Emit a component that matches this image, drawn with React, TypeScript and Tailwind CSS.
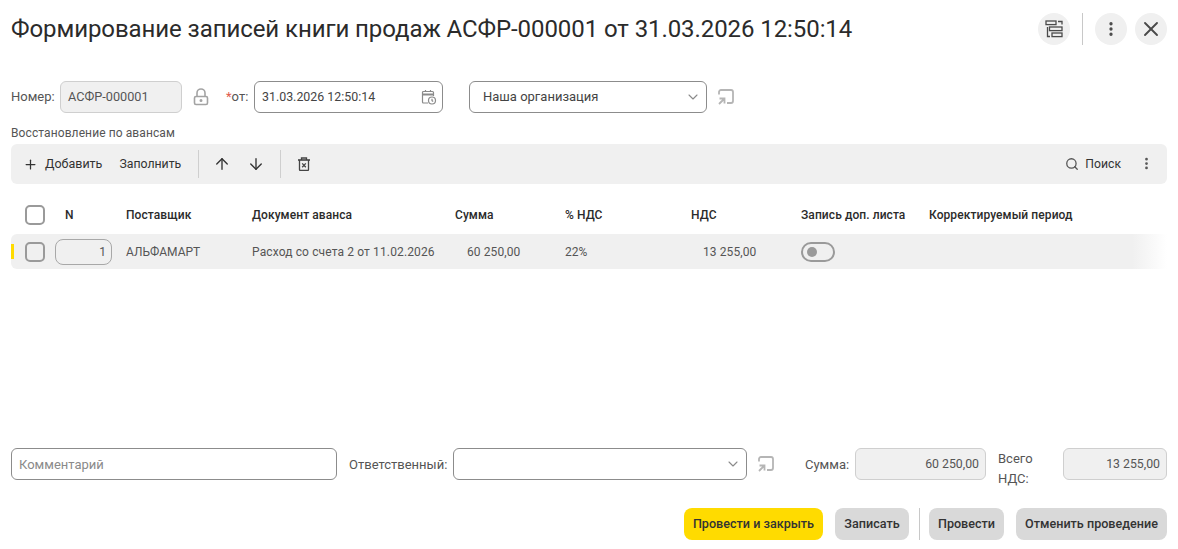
import { ArrowDown, ArrowUp, ChevronDown, MoreVertical, Plus, Search, X } from 'lucide-react';

const LockIcon = () => (
  <svg width="18" height="18" viewBox="0 0 18 18" fill="none" stroke="#a3a3a3" strokeWidth="1.6">
    <rect x="2.5" y="8.5" width="13" height="8" rx="1.5" />
    <path d="M5 8.5V5a4 4 0 0 1 8 0v3.5" />
    <circle cx="9" cy="12.5" r="0.7" fill="#a3a3a3" />
  </svg>
);

const CalendarClockIcon = () => (
  <svg width="16" height="16" viewBox="0 0 16 16" fill="none" stroke="#8a8a8a" strokeWidth="1.2">
    <path d="M7 14H2.5a1 1 0 0 1-1-1V3.5a1 1 0 0 1 1-1h9a1 1 0 0 1 1 1V7" />
    <path d="M1.5 5.5h11" strokeWidth="2" />
    <path d="M4.5 1v2M9.5 1v2" />
    <circle cx="11" cy="11.5" r="3.5" />
    <path d="M11 9.8v1.8l1.2.8" />
  </svg>
);

const OpenIcon = () => (
  <svg width="18" height="18" viewBox="0 0 18 18" fill="none" stroke="#b5b5b5" strokeWidth="1.8">
    <path d="M2 6.5V4a2 2 0 0 1 2-2h10a2 2 0 0 1 2 2v9a2 2 0 0 1-2 2h-4" />
    <path d="M7 11l-5 5M2.5 10.5H7.5V15.5" />
  </svg>
);

const StructureIcon = () => (
  <svg width="18" height="18" viewBox="0 0 18 18" fill="none" stroke="#4a4a4a" strokeWidth="1.3">
    <rect x="1" y="1" width="10" height="3.6" />
    <rect x="4.5" y="7" width="12.5" height="3.6" />
    <rect x="7" y="13" width="10" height="3.6" />
    <path d="M13 1.5H17V4.5M2.5 7V16.5H5" />
  </svg>
);

const TrashIcon = () => (
  <svg width="14" height="14" viewBox="0 0 14 14" fill="none" stroke="#444" strokeWidth="1.3">
    <path d="M1 3h12" strokeWidth="1.6" />
    <path d="M4.5 3V1h5v2" />
    <path d="M2.5 3v9.5a1 1 0 0 0 1 1h7a1 1 0 0 0 1-1V3" />
    <path d="M5.2 6.4l3.6 3.8M8.8 6.4l-3.6 3.8" />
  </svg>
);

const RoundButton = ({ children }: { children: React.ReactNode }) => (
  <button className="flex h-8 w-8 items-center justify-center rounded-full bg-[#f0f0f0] text-[#4a4a4a]">
    {children}
  </button>
);

const Field = ({
  text,
  className,
  size = 'text-[13px]',
  muted,
  right,
  children,
}: {
  text?: string;
  className: string;
  size?: string;
  muted?: boolean;
  right?: boolean;
  children?: React.ReactNode;
}) => (
  <div
    className={`flex h-8 items-center justify-between rounded-md border ${size} ${className} ${
      muted ? 'border-[#cfcfcf] bg-[#f0f0f0] text-[#555]' : 'border-[#8c8c8c] bg-white text-[#444]'
    } ${right ? 'pr-[6px]' : ''}`}
  >
    <span className={right ? 'ml-auto' : ''}>{text}</span>
    {children}
  </div>
);

const ActionButton = ({ text, className }: { text: string; className: string }) => (
  <button className={`flex h-8 items-center justify-center rounded-lg pt-px text-[12.6px] font-medium text-[#333] ${className}`}>
    {text}
  </button>
);

const cols = 'grid grid-cols-[30px_71px_126px_203px_110px_126px_110px_128px_1fr] items-center';

export default function App() {
  return (
    <div className="flex h-[549px] w-[1178px] flex-col overflow-hidden bg-white px-[11px] font-['Roboto',sans-serif] text-[#444]">
      <div className="flex h-[58px] shrink-0 items-center justify-between">
        <h1 className="text-2xl font-normal leading-8 tracking-[-0.08px] text-[#2b2b2b]">
          Формирование записей книги продаж АСФР-000001 от 31.03.2026 12:50:14
        </h1>
        <div className="flex items-center">
          <RoundButton>
            <StructureIcon />
          </RoundButton>
          <div className="mx-3 h-8 w-px bg-[#c8c8c8]" />
          <RoundButton>
            <MoreVertical size={18} strokeWidth={2.4} />
          </RoundButton>
          <div className="w-2" />
          <RoundButton>
            <X size={24} strokeWidth={1.9} />
          </RoundButton>
        </div>
      </div>

      <div className="mt-[23px] flex h-8 shrink-0 items-center text-[13px]">
        <span className="w-[49px] text-[#555]">Номер:</span>
        <Field text="АСФР-000001" size="text-[12.7px]" className="w-[122px] pl-[7px]" muted />
        <div className="ml-[10px] flex w-[18px] justify-center">
          <LockIcon />
        </div>
        <span className="ml-[16px] w-[28px] text-[#555]">
          <span className="text-[#e05a4a]">*</span>от:
        </span>
        <Field text="31.03.2026 12:50:14" size="text-[12.4px]" className="w-[189px] pl-[7px] pr-[5px]">
          <CalendarClockIcon />
        </Field>
        <Field text="Наша организация" className="ml-[26px] w-[238px] pl-[13px] pr-[5px]">
          <ChevronDown size={16} strokeWidth={1.6} color="#8a8a8a" />
        </Field>
        <div className="ml-[10px]">
          <OpenIcon />
        </div>
      </div>

      <div className="mt-3 h-[19px] shrink-0 text-xs leading-[16px] tracking-[0.1px] text-[#555]">Восстановление по авансам</div>

      <div className="flex h-10 shrink-0 items-center rounded-md bg-[#f0f0f0] pl-3 pr-[13px] text-[12.5px] text-[#333]">
        <Plus size={15} strokeWidth={2} />
        <span className="ml-[7px]">Добавить</span>
        <span className="ml-[17px] text-[12.3px]">Заполнить</span>
        <div className="ml-[17px] h-7 w-px bg-[#cfcfcf]" />
        <div className="ml-[14px]">
          <ArrowUp size={18} strokeWidth={1.8} />
        </div>
        <div className="ml-[16px]">
          <ArrowDown size={18} strokeWidth={1.8} />
        </div>
        <div className="ml-[15px] h-7 w-px bg-[#cfcfcf]" />
        <div className="ml-4 flex">
          <TrashIcon />
        </div>
        <div className="ml-auto flex items-center">
          <Search size={14} strokeWidth={2.2} color="#555" />
          <span className="ml-[6px] text-[12.2px] text-[#333]">Поиск</span>
          <MoreVertical size={15} strokeWidth={2.4} className="ml-[18px] text-[#555]" />
        </div>
      </div>

      <div className={`${cols} mt-[21px] h-[20px] shrink-0 pl-[14px] text-xs font-medium tracking-[0.08px] text-[#2b2b2b]`}>
        <div className="-mt-px h-5 w-5 rounded-[5px] border-2 border-[#9a9a9a] bg-white" />
        <span className="pl-[10px]">N</span>
        <span>Поставщик</span>
        <span>Документ аванса</span>
        <span>Сумма</span>
        <span>% НДС</span>
        <span>НДС</span>
        <span>Запись доп. листа</span>
        <span>Корректируемый период</span>
      </div>

      <div className="relative mt-[9px] h-[35px] shrink-0 rounded-l-md bg-gradient-to-r from-[#f0f0f0] from-[97%] to-white">
        <div className="absolute left-0 top-[10px] h-[15px] w-[3px] bg-[#ffdb00]" />
        <div className={`${cols} h-full pl-[14px] text-xs text-[#555]`}>
          <div className="h-5 w-5 rounded-[5px] border-2 border-[#9a9a9a]" />
          <div className="flex h-[26px] w-[57px] items-center justify-end rounded-lg border border-[#a8a8a8] pr-[5px]">1</div>
          <span>АЛЬФАМАРТ</span>
          <span className="tracking-[0.13px]">Расход со счета 2 от 11.02.2026</span>
          <span className="pl-3 tracking-[0.1px]">60 250,00</span>
          <span>22%</span>
          <span className="pl-3 tracking-[0.1px]">13 255,00</span>
          <div className="flex h-5 w-[34px] items-center rounded-full border-2 border-[#9a9a9a] pl-1">
            <div className="h-[10px] w-[10px] rounded-full bg-[#9a9a9a]" />
          </div>
          <span />
        </div>
      </div>

      <div className="flex-1" />

      <div className="flex h-8 shrink-0 items-center text-[13px]">
        <div className="flex h-8 w-[326px] items-center rounded-md border border-[#8c8c8c] pl-[7px] pt-px text-[#8a8a8a]">Комментарий</div>
        <span className="ml-3 w-[104px] pt-px text-[#555]">Ответственный:</span>
        <Field className="w-[294px] pr-[5px]">
          <ChevronDown size={16} strokeWidth={1.6} color="#8a8a8a" />
        </Field>
        <div className="ml-[10px]">
          <OpenIcon />
        </div>
        <span className="ml-[30px] w-[50px] pt-px text-[#555]">Сумма:</span>
        <Field text="60 250,00" size="text-[12.3px]" className="w-[131px]" muted right />
        <span className="ml-3 w-[65px] pt-[10px] leading-[20px] text-[#555]">
          Всего
          <br />
          НДС:
        </span>
        <Field text="13 255,00" size="text-[12.3px]" className="w-[104px]" muted right />
      </div>

      <div className="mb-[9px] mt-7 flex shrink-0 justify-end">
        <ActionButton text="Провести и закрыть" className="w-[139px] bg-[#ffdb00]" />
        <ActionButton text="Записать" className="ml-3 w-[74px] bg-[#d9d9d9]" />
        <div className="mx-[9.5px] h-8 w-px bg-[#c8c8c8]" />
        <ActionButton text="Провести" className="w-[75px] bg-[#d9d9d9]" />
        <ActionButton text="Отменить проведение" className="ml-3 w-[151px] bg-[#d9d9d9]" />
      </div>
    </div>
  );
}
